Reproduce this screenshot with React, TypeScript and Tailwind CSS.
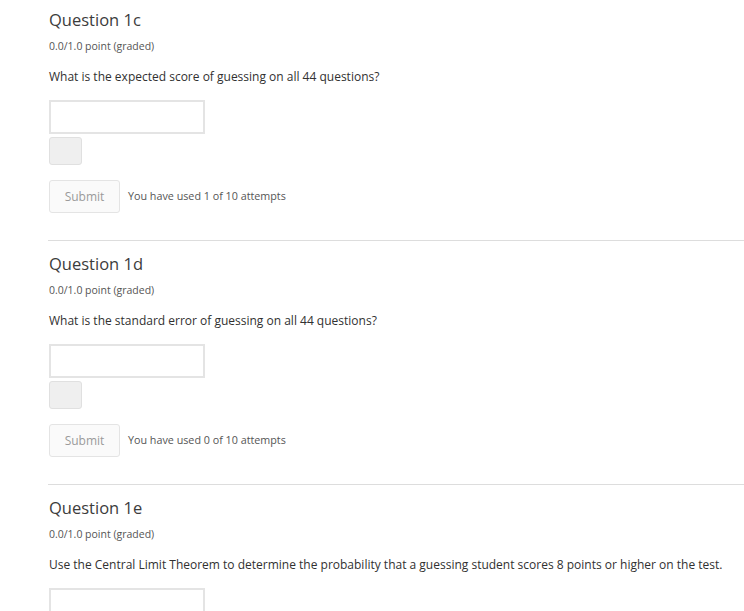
import React from 'react';

type Q = { id: string; prompt: string; used: number; last?: boolean };

const questions: Q[] = [
  { id: '1c', prompt: 'What is the expected score of guessing on all 44 questions?', used: 1 },
  { id: '1d', prompt: 'What is the standard error of guessing on all 44 questions?', used: 0 },
  {
    id: '1e',
    prompt: 'Use the Central Limit Theorem to determine the probability that a guessing student scores 8 points or higher on the test.',
    used: 0,
    last: true,
  },
];

const Question: React.FC<{ q: Q }> = ({ q }) => (
  <div className="pl-px">
    <h3 className="h-[22px] leading-[22px] text-[16.5px] font-normal text-[#3c3c3c]">Question {q.id}</h3>
    <div className="mt-[7px] h-4 leading-4 text-[10.5px] text-[#555]">0.0/1.0 point (graded)</div>
    <p className="mt-[15px] h-4 leading-4 text-[12px] text-[#313131]">{q.prompt}</p>
    <div className="mt-[15px] w-[156px] h-[34px] border-2 border-[#e4e4e4] bg-white" />
    {!q.last && (
      <>
        <div className="mt-[3px] w-[33px] h-[28px] rounded-[3px] border border-[#e0e0e0] bg-[#efefef]" />
        <div className="mt-[15px] flex items-center gap-[8px]">
          <button className="w-[71px] h-[33px] rounded-[3px] border border-[#e4e4e4] bg-[#fafafa] text-[12px] text-[#9a9a9a]">
            Submit
          </button>
          <span className="text-[10.75px] text-[#555]">You have used {q.used} of 10 attempts</span>
        </div>
      </>
    )}
  </div>
);

export default function App() {
  return (
    <div className="w-[744px] h-[611px] overflow-hidden bg-white pl-[48px] pt-[9px]" style={{ fontFamily: '"Open Sans", sans-serif' }}>
      {questions.map((q, i) => (
        <div key={q.id}>
          {i > 0 && <div className="mt-[27px] mb-[12px] h-px bg-[#dddddd]" />}
          <Question q={q} />
        </div>
      ))}
    </div>
  );
}
